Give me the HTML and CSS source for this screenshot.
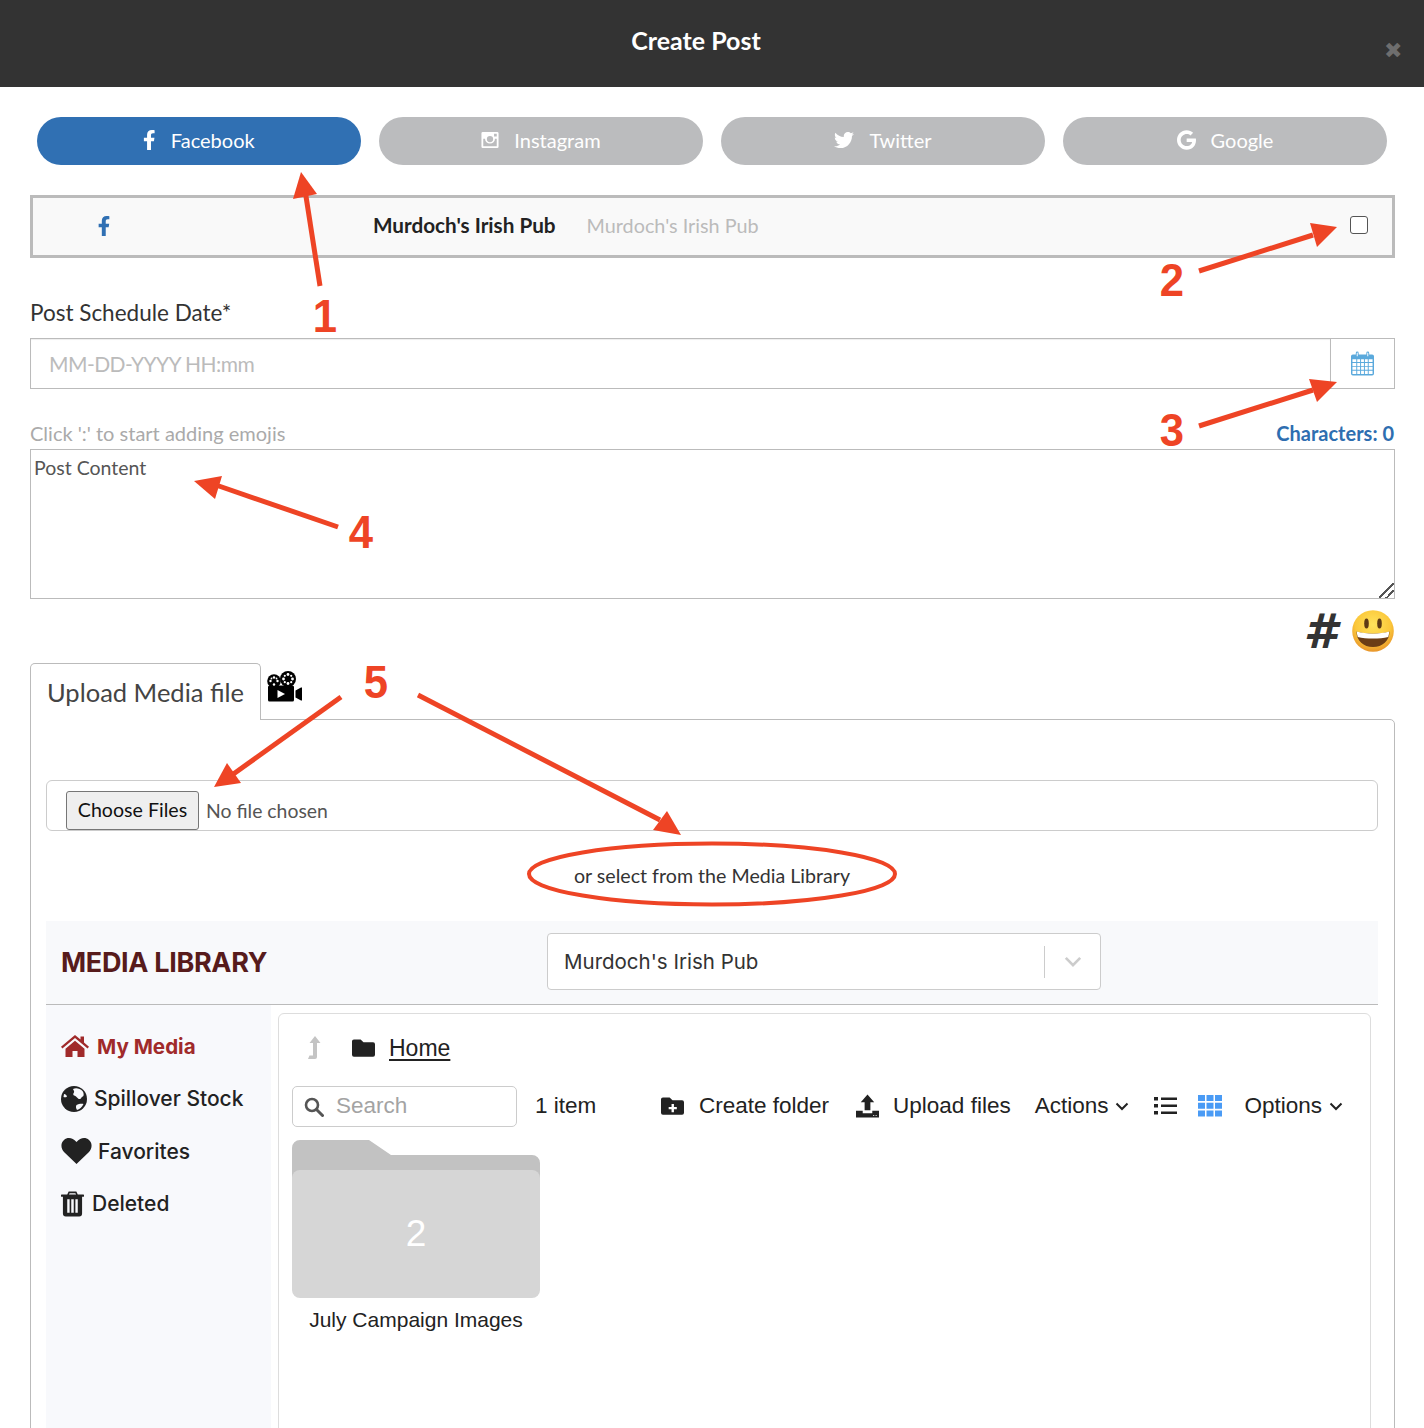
FILE: index.html
```html
<!DOCTYPE html>
<html lang="en">
<head>
<meta charset="utf-8">
<title>Create Post</title>
<link rel="stylesheet" href="styles.css">
</head>
<body>
<div class="page">
  <header class="modal-head">
    <h1 class="modal-title">Create Post</h1>
    <span class="modal-close">&#10006;</span>
  </header>
  <main class="modal-body">
    <nav class="network-tabs">
      <a class="network active"><svg class="ni ni-f" viewBox="0 0 320 512"><path d="M279.14 288l14.22-92.66h-88.91v-60.13c0-25.35 12.42-50.06 52.24-50.06h40.42V6.26S260.43 0 225.36 0c-73.22 0-121.08 44.38-121.08 124.72v70.62H22.89V288h81.39v224h100.17V288z"/></svg><span>Facebook</span></a>
      <a class="network"><svg class="ni ni-i" viewBox="0 0 20 20"><path fill-rule="evenodd" d="M2 1h16a1.500 1.500 0 0 1 1.500 1.500v15A1.500 1.500 0 0 1 18 19H2a1.500 1.500 0 0 1-1.500-1.500v-15A1.500 1.500 0 0 1 2 1zm12.500 2v3h3V3zM2.500 8.500V17h15V8.500h-2a5.500 5.500 0 1 1-11 0zM10 5.500a3.500 3.500 0 1 0 0 7 3.500 3.500 0 0 0 0-7z"/></svg><span>Instagram</span></a>
      <a class="network"><svg class="ni ni-t" viewBox="0 0 512 512"><path d="M459.37 151.716c.325 4.548.325 9.097.325 13.645 0 138.72-105.583 298.558-298.558 298.558-59.452 0-114.68-17.219-161.137-47.106 8.447.974 16.568 1.299 25.34 1.299 49.055 0 94.213-16.568 130.274-44.832-46.132-.975-84.792-31.188-98.112-72.772 6.498.974 12.995 1.624 19.818 1.624 9.421 0 18.843-1.3 27.614-3.573-48.081-9.747-84.143-51.98-84.143-102.985v-1.299c13.969 7.797 30.214 12.67 47.431 13.319-28.264-18.843-46.781-51.005-46.781-87.391 0-19.492 5.197-37.36 14.294-52.954 51.655 63.675 129.3 105.258 216.365 109.807-1.624-7.797-2.599-15.918-2.599-24.04 0-57.828 46.782-104.934 104.934-104.934 30.213 0 57.502 12.67 76.67 33.137 23.715-4.548 46.456-13.32 66.599-25.34-7.798 24.366-24.366 44.833-46.132 57.827 21.117-2.273 41.584-8.122 60.426-16.243-14.292 20.791-32.161 39.308-52.628 54.253z"/></svg><span>Twitter</span></a>
      <a class="network"><svg class="ni ni-g" viewBox="0 0 488 512"><path d="M488 261.8C488 403.3 391.1 504 248 504 110.8 504 0 393.2 0 256S110.8 8 248 8c66.8 0 123 24.5 166.3 64.9l-67.5 64.9C258.5 52.6 94.3 116.6 94.3 256c0 86.5 69.1 156.6 153.7 156.6 98.2 0 135-70.4 140.8-106.9H248v-85.3h236.1c2.3 12.7 3.900 24.9 3.900 41.400z"/></svg><span>Google</span></a>
    </nav>

    <section class="account">
      <svg class="account-f" viewBox="0 0 320 512"><path d="M279.14 288l14.22-92.66h-88.91v-60.13c0-25.35 12.42-50.06 52.24-50.06h40.42V6.26S260.43 0 225.36 0c-73.22 0-121.08 44.38-121.08 124.72v70.62H22.89V288h81.39v224h100.17V288z"/></svg>
      <strong class="account-name">Murdoch's Irish Pub</strong>
      <span class="account-sub">Murdoch's Irish Pub</span>
      <input class="account-check" type="checkbox" aria-label="Select account">
    </section>

    <label class="field-label">Post Schedule Date*</label>
    <div class="date-group">
      <input class="date-input" type="text" placeholder="MM-DD-YYYY HH:mm">
      <span class="date-addon">
        <svg class="cal" viewBox="0 0 24 25"><path fill="#5aa9dc" d="M2 3h3V1.500a1.500 1.500 0 0 1 3 0V3h8V1.500a1.500 1.500 0 0 1 3 0V3h3a2 2 0 0 1 2 2v18a2 2 0 0 1-2 2H2a2 2 0 0 1-2-2V5a2 2 0 0 1 2-2z"/><path fill="#fff" d="M6 1.500a.500.500 0 0 1 1 0V5H6zM17 1.500a.500.500 0 0 1 1 0V5h-1zM1.500 8h4v3h-4zM6.500 8h3v3h-3zM10.500 8h3v3h-3zM14.500 8h3v3h-3zM18.500 8h4v3h-4zM1.500 12h4v3h-4zM6.500 12h3v3h-3zM10.500 12h3v3h-3zM14.500 12h3v3h-3zM18.500 12h4v3h-4zM1.500 16h4v3h-4zM6.500 16h3v3h-3zM10.500 16h3v3h-3zM14.500 16h3v3h-3zM18.500 16h4v3h-4zM1.500 20h4v3.500h-4zM6.500 20h3v3.500h-3zM10.500 20h3v3.500h-3zM14.500 20h3v3.500h-3zM18.500 20h4v3.500h-4z"/></svg>
      </span>
    </div>

    <div class="hint-row">
      <span class="hint">Click ':' to start adding emojis</span>
      <span class="char-count">Characters: 0</span>
    </div>
    <textarea class="post-content" placeholder="Post Content"></textarea>

    <div class="extras">
      <span class="hash">#</span>
      <svg class="emoji" viewBox="0 0 42 42">
        <defs><radialGradient id="face" cx="50%" cy="35%" r="65%"><stop offset="0" stop-color="#ffe35c"/><stop offset=".65" stop-color="#fbc73a"/><stop offset="1" stop-color="#e8952a"/></radialGradient></defs>
        <circle cx="21" cy="21" r="20.800" fill="url(#face)"/>
        <ellipse cx="14.500" cy="13.500" rx="2.300" ry="5" fill="#5e3a14"/>
        <ellipse cx="27.500" cy="13.500" rx="2.300" ry="5" fill="#5e3a14"/>
        <path d="M4.500 21.500c5 1.500 10.500 2.200 16.500 2.200s11.500-.7 16.500-2.200c0 9.500-7 15.500-16.500 15.500S4.500 31 4.500 21.500z" fill="#6b3d16"/>
        <path d="M4.800 21.600c5 1.500 10.500 2.100 16.200 2.100s11.200-.6 16.200-2.100c0 2-.4 3.800-1 5.300-4.500 1.100-9.500 1.600-15.200 1.600s-10.700-.5-15.200-1.600c-.6-1.500-1-3.300-1-5.300z" fill="#fff"/>
      </svg>
    </div>

    <div class="media-tabs">
      <div class="media-tab">Upload Media file</div>
      <svg class="film" viewBox="0 0 36 31"><g fill="#000"><circle cx="8" cy="10" r="6.800"/><circle cx="22" cy="8" r="8"/><path d="M3.500 14.500h23a1.500 1.500 0 0 1 1.500 1.500v13a1.500 1.500 0 0 1-1.500 1.500h-23A1.500 1.500 0 0 1 2 29V16a1.500 1.500 0 0 1 1.500-1.500zM29.500 19.500l5.500-3h1v13h-1l-5.500-3z"/></g><g fill="#fff"><circle cx="8" cy="6.500" r="1.200"/><circle cx="8" cy="13.500" r="1.200"/><circle cx="4.500" cy="10" r="1.200"/><circle cx="11.500" cy="10" r="1.200"/><circle cx="5.500" cy="7.500" r=".9"/><circle cx="10.500" cy="7.500" r=".9"/><circle cx="22" cy="3.500" r="1.400"/><circle cx="22" cy="12.500" r="1.400"/><circle cx="17.500" cy="8" r="1.400"/><circle cx="26.500" cy="8" r="1.400"/><circle cx="18.800" cy="4.800" r="1.100"/><circle cx="25.200" cy="4.800" r="1.100"/><circle cx="18.800" cy="11.200" r="1.100"/><circle cx="25.200" cy="11.200" r="1.100"/><path d="M11.500 19l7.500 4-7.500 4z"/></g></svg>
    </div>

    <section class="media-panel">
      <div class="file-box">
        <button class="file-btn" type="button">Choose Files</button>
        <span class="file-none">No file chosen</span>
      </div>
      <p class="or-select">or select from the Media Library</p>

      <div class="lib-head">
        <h2 class="lib-title">MEDIA LIBRARY</h2>
        <div class="lib-select">
          <span class="lib-select-value">Murdoch's Irish Pub</span>
          <span class="lib-select-sep"></span>
          <svg class="lib-select-chev" viewBox="0 0 20 12"><path d="M2 2l8 8 8-8" fill="none" stroke="#ccc" stroke-width="3"/></svg>
        </div>
      </div>

      <div class="lib-body">
        <aside class="lib-side">
          <a class="side-item current">
            <svg class="si si-home" viewBox="0 0 28 22"><path fill="#a02a2a" d="M14 0l5.500 4.600V1.500h3.500v6l5 4.200-1.400 1.800L14 3 1.400 13.500 0 11.700zM4.500 13.800L14 5.800l9.500 8V22H16.500v-6h-5v6H4.500z"/></svg>My Media</a>
          <a class="side-item">
            <svg class="si si-globe" viewBox="0 0 26 26"><circle cx="13" cy="13" r="13" fill="#222"/><path fill="#f8f9fc" d="M12 3c3-1.500 7-.5 9.500 2 1.500 2 1.500 4.500.5 5.500-1.500 0-1.500 2-3 2.500-1.500.5-2-1-3-1.500-1-1-1.500-2-3-2-1-.5-1-2 0-3 .5-1.500-.5-2-1-3.500zM15.500 19c2-1 5-1.500 7-1-1.500 3-4 5.500-6.500 6-1-1.500-1.500-3.500-.5-5zM3 8c1.500 0 2.500 1 3 2.500-1 1-2.500 1-3.500.5z"/></svg>Spillover Stock</a>
          <a class="side-item">
            <svg class="si si-heart" viewBox="0 0 30 26"><path fill="#222" d="M15 26L3 14.500C-1 10.500-1 5 2.500 2 6-1 11-.5 15 4c4-4.500 9-5 12.500-2 3.500 3 3.500 8.500-.5 12.500z"/></svg>Favorites</a>
          <a class="side-item">
            <svg class="si si-trash" viewBox="0 0 24 26"><path fill="#222" d="M8 0h8l1.500 3H23a1 1 0 0 1 0 2.500h-1V23a3 3 0 0 1-3 3H5a3 3 0 0 1-3-3V5.500H1A1 1 0 0 1 1 3h5.500zM9 1.800L8.300 3h7.400L15 1.800zM6.500 8v14h2.500V8zm4.200 0v14h2.600V8zM15 8v14h2.500V8z" fill-rule="evenodd"/></svg>Deleted</a>
        </aside>

        <div class="lib-main">
          <div class="crumbs">
            <svg class="up" viewBox="0 0 14 24"><path fill="#c4c4c4" d="M8 0l5.500 7H10v14a2 2 0 0 1-2 2H1l1.500-3.500H6V7H2.500z"/></svg>
            <svg class="crumb-folder" viewBox="0 0 24 18"><path fill="#222" d="M2 0h7l3 3h10a2 2 0 0 1 2 2v11a2 2 0 0 1-2 2H2a2 2 0 0 1-2-2V2a2 2 0 0 1 2-2z"/></svg>
            <a class="crumb-home">Home</a>
          </div>
          <div class="toolbar">
            <div class="search">
              <svg class="search-ico" viewBox="0 0 20 20"><circle cx="8" cy="8" r="6" fill="none" stroke="#555" stroke-width="2.600"/><path d="M12.500 12.500l6 6" stroke="#555" stroke-width="3" stroke-linecap="round"/></svg>
              <span class="search-ph">Search</span>
            </div>
            <span class="count">1 item</span>
            <a class="tool tool-create"><svg class="ti" viewBox="0 0 24 18"><path fill="#222" fill-rule="evenodd" d="M2 0h7l3 3h10a2 2 0 0 1 2 2v11a2 2 0 0 1-2 2H2a2 2 0 0 1-2-2V2a2 2 0 0 1 2-2zm9 7v3H8v2.500h3V15.500h2.500v-3h3V10h-3V7z"/></svg>Create folder</a>
            <a class="tool tool-upload"><svg class="ti-up" viewBox="0 0 24 24"><path fill="#222" fill-rule="evenodd" d="M12 0l7 8h-4v8.500h-6V8H5zM0 17h7v2.500h10V17h7v7H0zM18 21.500v1h1v-1zM20.500 21.500v1h1v-1z"/></svg>Upload files</a>
            <a class="tool tool-actions">Actions<svg class="chev" viewBox="0 0 14 9"><path d="M1.500 1.500L7 7l5.500-5.500" fill="none" stroke="#222" stroke-width="2"/></svg></a>
            <svg class="view-list" viewBox="0 0 23 18"><path fill="#222" d="M0 0h4v3.500H0zM7 .5h16v2.500H7zM0 7h4v3.500H0zM7 7.500h16V10H7zM0 14h4v3.500H0zM7 14.500h16V17H7z"/></svg>
            <svg class="view-grid" viewBox="0 0 24 22"><path fill="#4a9bf5" d="M0 0h7v6H0zM8.500 0h7v6h-7zM17 0h7v6h-7zM0 7.800h7v6H0zM8.500 7.800h7v6h-7zM17 7.800h7v6h-7zM0 15.600h7v6H0zM8.500 15.600h7v6h-7zM17 15.600h7v6h-7z"/></svg>
            <a class="tool tool-options">Options<svg class="chev" viewBox="0 0 14 9"><path d="M1.500 1.500L7 7l5.500-5.500" fill="none" stroke="#222" stroke-width="2"/></svg></a>
          </div>
          <figure class="folder">
            <div class="folder-art">
              <svg class="folder-back" viewBox="0 0 248 40"><path fill="#c2c2c2" d="M8 0h69l22 15h141a8 8 0 0 1 8 8v17H0V8a8 8 0 0 1 8-8z"/></svg>
              <div class="folder-front">2</div>
            </div>
            <figcaption class="folder-name">July Campaign Images</figcaption>
          </figure>
        </div>
      </div>
    </section>
  </main>

  <svg class="annotations" viewBox="0 0 1424 1428" width="1424" height="1428">
    <g fill="none" stroke="#ee4425" stroke-width="5">
      <path d="M320 286L305 190"/>
      <path d="M1199 271L1313 235"/>
      <path d="M1199 426L1313 390"/>
      <path d="M338 527L216 485"/>
      <path d="M341 697L232 775"/>
      <path d="M418 695L660 820"/>
    </g>
    <g fill="#ee4425">
      <path d="M301 172L293 199L317 194z"/>
      <path d="M1337 227L1310 223L1317 247z"/>
      <path d="M1337 382L1309 379L1317 402z"/>
      <path d="M194 481L222 476L215 499z"/>
      <path d="M214 787L227 763L241 783z"/>
      <path d="M681 835L653 830L667 811z"/>
    </g>
    <ellipse cx="712" cy="874" rx="183" ry="30.500" fill="none" stroke="#ee4425" stroke-width="4"/>
    <g class="anno-num">
      <text transform="translate(325 332) scale(.95 1)">1</text>
      <text transform="translate(1172 296) scale(.95 1)">2</text>
      <text transform="translate(1172 446) scale(.95 1)">3</text>
      <text transform="translate(361 548) scale(.95 1)">4</text>
      <text transform="translate(376 698) scale(.95 1)">5</text>
    </g>
  </svg>
</div>
</body>
</html>
```
FILE: styles.css
```css
* { box-sizing: border-box; }
html, body { margin: 0; padding: 0; background: #fff; }
body { font-family: "Lato", "Noto Sans", sans-serif; color: #333; }
.page { position: relative; width: 1424px; height: 1428px; overflow: hidden; }

.modal-head { position: relative; height: 87px; background: #333; display: flex; justify-content: center; }
.modal-title { margin: 23px 32px 0 0; font-size: 25px; line-height: 34px; font-weight: 700; color: #fff; }
.modal-close { position: absolute; left: 1384px; top: 38px; font-size: 22px; line-height: 26px; color: #6e6e6e; font-family: "DejaVu Sans", sans-serif; }

.modal-body { padding: 30px 29px 0 30px; }

.network-tabs { display: flex; gap: 18px; padding: 0 8px 0 7px; }
.network { flex: 1; height: 48px; border-radius: 24px; background: #bbbcbe; color: #fff; display: flex; align-items: center; justify-content: center; gap: 15px; font-size: 20px; font-weight: 400; }
.network span { margin-top: -2px; }
.network.active { background: #3070b3; }
.ni { height: 20px; fill: #fff; flex: none; margin-top: -2px; }
.ni-f { width: 12.500px; }
.ni-i { width: 18px; }
.ni-t { width: 20px; }
.ni-g { width: 19px; }

.account { margin-top: 30px; height: 63px; border: 3px solid #bbb; background: #f9f9f9; display: flex; align-items: center; position: relative; }
.account-f { width: 20px; height: 20px; fill: #3070b3; margin-left: 61px; margin-top: -2px; flex: none; }
.account-name { margin-left: 259px; font-size: 20.700px; font-weight: 700; color: #222; margin-top: -4px; }
.account-sub { margin-left: 31px; font-size: 19.800px; color: #bbb; margin-top: -4px; }
.account-check { appearance: none; margin: -4px 24px 0 auto; width: 18px; height: 18px; border: 1px solid #555; border-radius: 3px; background: #fff; }

.field-label { display: block; margin-top: 40px; font-size: 22.500px; line-height: 30px; color: #333; }
.date-group { display: flex; margin-top: 10px; height: 51px; border: 1px solid #bbb; }
.date-input { flex: 1; border: 0; outline: 0; padding: 0 0 0 18px; font: inherit; font-size: 21px; letter-spacing: -.55px; box-shadow: inset 0 1px 1px rgba(0,0,0,.07); }
.date-input::placeholder { color: #bbb; opacity: 1; }
.date-addon { width: 64px; border-left: 1px solid #bbb; display: flex; align-items: center; justify-content: center; }
.cal { width: 23px; height: 25px; }

.hint-row { display: flex; justify-content: space-between; align-items: flex-end; margin-top: 30px; height: 30px; padding-bottom: 3px; }
.hint { font-size: 20px; line-height: 26px; color: #aaa; }
.char-count { font-size: 20px; line-height: 26px; font-weight: 700; color: #2e6eb0; margin-right: 1px; }
.post-content { display: block; width: 100%; height: 150px; border: 1px solid #bbb; padding: 4px 3px; margin: 0; outline: 0; font: inherit; font-size: 19.500px; line-height: 28px; resize: vertical; }
.post-content::placeholder { color: #555; opacity: 1; }
.post-content::-webkit-resizer { background: linear-gradient(135deg, transparent 46%, #555 46%, #555 54%, transparent 54%, transparent 70%, #555 70%, #555 78%, transparent 78%); }

.extras { display: flex; justify-content: flex-end; align-items: center; gap: 15px; height: 42px; margin-top: 11px; padding-right: 1px; }
.hash { font-family: "DejaVu Sans", sans-serif; font-size: 48px; line-height: 42px; font-weight: 700; font-style: italic; color: #333; }
.emoji { width: 42px; height: 42px; }

.media-tabs { display: flex; margin-top: 11px; height: 57px; position: relative; z-index: 1; }
.media-tab { width: 231px; height: 57px; padding-left: 16px; border: 1px solid #bbb; border-bottom: 0; border-radius: 5px 5px 0 0; background: #fff; font-size: 25.500px; line-height: 57px; color: #444; }
.film { width: 36px; height: 31px; margin: 8px 0 0 5px; }

.media-panel { margin-top: -1px; height: 800px; border: 1px solid #bbb; border-radius: 0 5px 0 0; padding: 60px 16px 0 15px; }
.file-box { height: 51px; border: 1px solid #ccc; border-radius: 6px; padding: 10px 0 0 19px; display: flex; align-items: center; }
.file-btn { width: 133px; height: 39px; padding: 0 0 2px; border: 1px solid #767676; border-radius: 3px; background: #efefef; font: inherit; font-size: 19.600px; color: #111; }
.file-none { margin-left: 7px; font-size: 19.400px; color: #555; margin-top: -1px; }
.or-select { margin: 30px 0 0; text-align: center; font-size: 19.650px; line-height: 29px; color: #333; }

.lib-head { margin-top: 31px; height: 84px; background: #f8f9fb; border-bottom: 1px solid #bbb; display: flex; align-items: center; padding: 0 0 1px 15px; }
.lib-title { margin: 0; width: 486px; font-family: "Inter", sans-serif; font-size: 27px; font-weight: 700; letter-spacing: -.33px; color: #571b1b; }
.lib-select { width: 554px; height: 57px; margin-top: -1px; background: #fff; border: 1px solid #ccc; border-radius: 4px; display: flex; align-items: center; padding-left: 16px; }
.lib-select-value { flex: 1; font-family: "Inter", sans-serif; font-size: 20.500px; color: #333; }
.lib-select-sep { width: 1px; height: 32px; background: #ccc; }
.lib-select-chev { width: 18px; height: 11px; margin: 0 18px 0 19px; }

.lib-body { display: flex; height: 600px; }
.lib-side { width: 225px; background: #f8f9fc; padding-top: 15px; display: flex; flex-direction: column; }
.side-item { display: flex; align-items: center; height: 52.500px; padding-left: 15px; font-family: "Inter", sans-serif; font-size: 21px; font-weight: 500; color: #222; }
.side-item.current { color: #a02a2a; font-weight: 700; font-size: 20.600px; }
.si { flex: none; }
.si-home { width: 28px; height: 22px; margin-right: 8px; }
.si-globe { width: 26px; height: 26px; margin-right: 7px; }
.si-heart { width: 31px; height: 26px; margin-right: 6px; }
.si-trash { width: 23px; height: 26px; margin-right: 8px; }

.lib-main { margin: 8px 0 0 7px; width: 1093px; border: 1px solid #ddd; border-radius: 6px 6px 0 0; padding: 0 13px; font-family: "Liberation Sans", Arial, sans-serif; color: #222; }
.crumbs { height: 72px; display: flex; align-items: center; padding: 0 0 4px 15px; }
.up { width: 14px; height: 24px; }
.crumb-folder { width: 23px; height: 18px; margin-left: 31px; }
.crumb-home { margin-left: 14px; font-size: 23px; text-decoration: underline; text-underline-offset: 3px; }
.toolbar { display: flex; align-items: center; height: 41px; font-size: 22.500px; }
.search { width: 225px; height: 41px; border: 1px solid #ccc; border-radius: 5px; display: flex; align-items: center; padding-left: 11px; flex: none; }
.search-ico { width: 20px; height: 20px; }
.search-ph { margin: -1px 0 0 12px; color: #a3a3a3; }
.count { margin: -1px 0 0 18px; width: 126px; flex: none; }
.tool { display: flex; align-items: center; flex: none; margin-top: -1px; }
.ti { width: 23px; height: 18px; margin-right: 15px; }
.ti-up { width: 23px; height: 24px; margin-right: 14px; }
.tool-upload { margin-left: 27px; }
.tool-actions { margin-left: 24px; }
.chev { width: 14px; height: 9px; margin-left: 7px; }
.view-list { width: 23px; height: 18px; margin-left: 25px; flex: none; margin-top: -2px; }
.view-grid { width: 24px; height: 22px; margin-left: 21px; flex: none; margin-top: -2px; }
.tool-options { margin-left: 22px; }

.folder { margin: 13px 0 0; width: 248px; }
.folder-art { position: relative; height: 158px; }
.folder-back { display: block; width: 248px; height: 40px; }
.folder-front { position: absolute; left: 0; right: 0; top: 30px; bottom: 0; border-radius: 8px; background: #d6d6d6; color: #fff; font-size: 37px; line-height: 128px; text-align: center; }
.folder-name { margin-top: 8px; text-align: center; font-size: 21px; line-height: 28px; color: #222; }

.annotations { position: absolute; left: 0; top: 0; pointer-events: none; }
.anno-num text { font-family: "Liberation Sans", Arial, sans-serif; font-weight: 700; font-size: 46px; fill: #ee4425; text-anchor: middle; }
```
